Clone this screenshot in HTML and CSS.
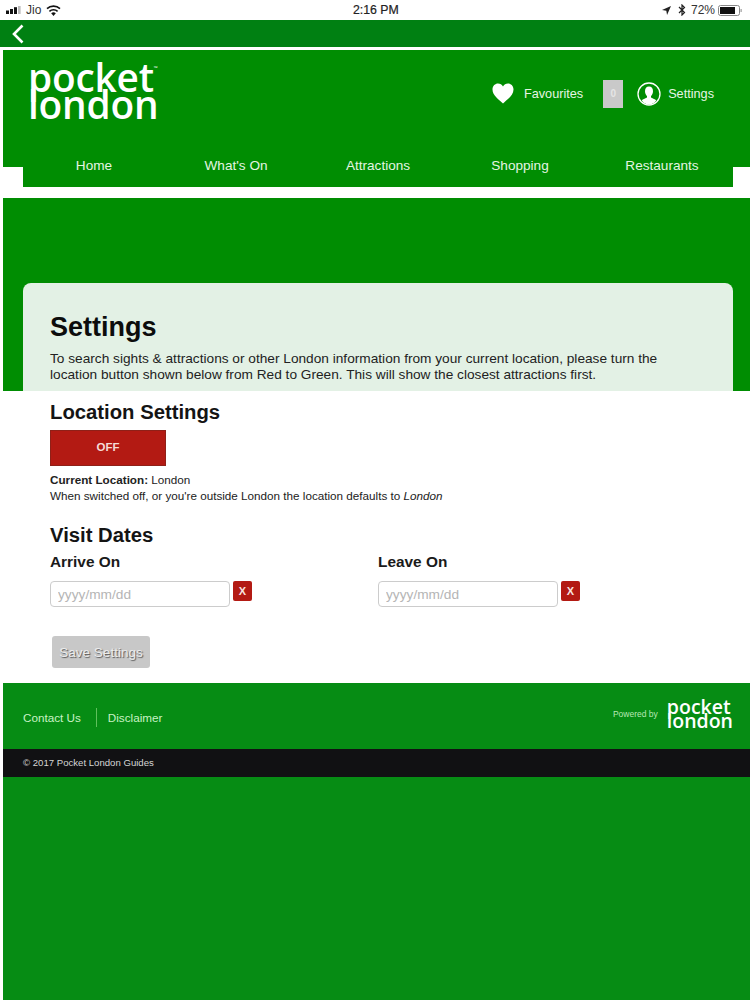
FILE: index.html
```html
<!DOCTYPE html>
<html lang="en">
<head>
<meta charset="utf-8">
<title>Settings - Pocket London</title>
<link rel="stylesheet" href="styles.css">
</head>
<body>
<div class="status">
  <div class="status-left">
    <svg class="signal" width="15" height="8" viewBox="0 0 15 8"><rect x="0" y="4.5" width="3" height="3.5" fill="#111"/><rect x="4" y="3" width="3" height="5" fill="#111"/><rect x="8" y="1.2" width="3" height="6.8" fill="#111"/><rect x="12" y="0" width="2.6" height="8" fill="#bbb"/></svg>
    <span>Jio</span>
    <svg width="15" height="11" viewBox="0 0 15 11"><path d="M7.5 11 L5.2 8.3 A3.4 3.4 0 0 1 9.8 8.3 Z" fill="#111"/><path d="M3.4 6.3 A6 6 0 0 1 11.6 6.3" fill="none" stroke="#111" stroke-width="1.6"/><path d="M1 3.7 A9.4 9.4 0 0 1 14 3.7" fill="none" stroke="#111" stroke-width="1.6"/></svg>
  </div>
  <div class="status-time">2:16 PM</div>
  <div class="status-right">
    <svg class="arrow-ico" width="9" height="9" viewBox="0 0 10 10"><path d="M10 0 L0 4.4 L4.8 5.2 L5.6 10 Z" fill="#222"/></svg>
    <svg class="bt-ico" width="8" height="12" viewBox="0 0 8 12"><path d="M1 3 L6.5 8.5 L4 11 V1 L6.5 3.5 L1 9" fill="none" stroke="#222" stroke-width="1.2"/></svg>
    <span>72%</span>
    <svg width="24" height="11" viewBox="0 0 24 11"><rect x="0.5" y="0.5" width="21" height="10" rx="2" fill="none" stroke="#888"/><rect x="2" y="2" width="15" height="7" fill="#111"/><rect x="22.6" y="4" width="1" height="3" fill="#888"/></svg>
  </div>
</div>
<div class="page">
  <div class="backbar">
    <svg width="12" height="20" viewBox="0 0 12 20"><path d="M10.5 1.5 L2 10 L10.5 18.5" fill="none" stroke="#fff" stroke-width="2.6"/></svg>
  </div>
  <div class="shell">
    <header class="top">
      <div class="top-row">
        <div class="logo"><span>pocket<sup class="tm">™</sup></span><span>london</span></div>
        <div class="tools">
          <svg class="heart" width="22" height="21" viewBox="0 0 22 21"><path d="M11 20.5 C7 16.5 0.5 12.5 0.5 6.5 C0.5 2.8 3.2 0.5 6 0.5 C8.2 0.5 10 1.7 11 3.6 C12 1.7 13.8 0.5 16 0.5 C18.8 0.5 21.5 2.8 21.5 6.5 C21.5 12.5 15 16.5 11 20.5 Z" fill="#fff"/></svg>
          <span class="tool-label">Favourites</span>
          <span class="count">0</span>
          <svg class="user" width="24" height="24" viewBox="0 0 24 24"><circle cx="12" cy="12" r="11" fill="none" stroke="#fff" stroke-width="1.3"/><path d="M12 4.5 C9.4 4.5 8 6.6 8 9.2 C8 11.2 8.9 13 10 14 L10 15.6 C8 16.8 5.8 17.2 4.8 18.6 C6.6 21.2 9.2 22.6 12 22.6 C14.8 22.6 17.4 21.2 19.2 18.6 C18.2 17.2 16 16.8 14 15.6 L14 14 C15.1 13 16 11.2 16 9.2 C16 6.6 14.6 4.5 12 4.5 Z" fill="#fff"/></svg>
          <span class="tool-label">Settings</span>
        </div>
      </div>
      <nav class="nav">
        <a>Home</a><a>What's On</a><a>Attractions</a><a>Shopping</a><a>Restaurants</a>
      </nav>
    </header>
    <section class="hero">
      <div class="intro">
        <h1>Settings</h1>
        <p>To search sights &amp; attractions or other London information from your current location, please turn the location button shown below from Red to Green. This will show the closest attractions first.</p>
      </div>
    </section>
    <main class="content">
      <h2 class="h-location">Location Settings</h2>
      <button class="off">OFF</button>
      <p class="loc"><b>Current Location:</b> London</p>
      <p class="loc">When switched off, or you're outside London the location defaults to <i>London</i></p>
      <h2 class="h-visit">Visit Dates</h2>
      <div class="dates">
        <div class="date">
          <h3>Arrive On</h3>
          <div class="date-row"><input class="date-input" placeholder="yyyy/mm/dd"><span class="clear">X</span></div>
        </div>
        <div class="date">
          <h3>Leave On</h3>
          <div class="date-row"><input class="date-input" placeholder="yyyy/mm/dd"><span class="clear">X</span></div>
        </div>
      </div>
      <button class="save">Save Settings</button>
    </main>
    <footer class="foot">
      <div class="foot-main">
        <div class="foot-links"><a>Contact Us</a><a class="second">Disclaimer</a></div>
        <div class="powered"><span>Powered by</span><div class="logo-small"><span>pocket</span><span>london</span></div></div>
      </div>
      <div class="copy">© 2017 Pocket London Guides</div>
    </footer>
    <div class="rest"></div>
  </div>
</div>
</body>
</html>
```

FILE: styles.css
```css
* { box-sizing: border-box; }
html, body { margin: 0; padding: 0; }
body {
  width: 750px;
  height: 1000px;
  overflow: hidden;
  background: #fff;
  font-family: "Liberation Sans", Arial, sans-serif;
  color: #111;
  display: flex;
  flex-direction: column;
}
.status {
  height: 20px;
  flex: none;
  display: flex;
  align-items: center;
  justify-content: space-between;
  padding: 0 8px 0 6px;
  font-size: 12px;
  color: #333;
  position: relative;
}
.status-left, .status-right { display: flex; align-items: center; gap: 5px; }
.status-right { gap: 3px; }
.arrow-ico { margin-right: 4px; }
.bt-ico { margin-right: 2px; }
.status-time {
  position: absolute;
  left: 353px;
  top: 3px;
  font-size: 12.3px;
  color: #222;
  font-weight: 400;
  -webkit-text-stroke: 0.2px #222;
}
.page { flex: 1; display: flex; flex-direction: column; min-height: 0; }
.backbar {
  height: 27px;
  flex: none;
  background: #008012;
  display: flex;
  align-items: center;
  padding-left: 12px;
}
.shell {
  flex: 1;
  margin: 3px 0 0 3px;
  display: flex;
  flex-direction: column;
  min-height: 0;
}
.top { height: 137px; flex: none; }
.top-row {
  height: 117px;
  background: #008d02;
  display: flex;
  justify-content: space-between;
  padding: 11px 0 0 25px;
}
.logo {
  display: flex;
  flex-direction: column;
  font-family: "Open Sans", sans-serif;
  font-weight: 600;
  font-size: 38.8px;
  letter-spacing: -0.2px;
  line-height: 27px;
  color: #fff;
  margin-top: 3px;
}
.tm { font-size: 5px; line-height: 0; vertical-align: 22px; }
.tools {
  display: flex;
  align-items: center;
  height: 65px;
  color: #e6f5e4;
  font-size: 12.7px;
  padding-right: 36px;
}
.heart { margin-right: 10px; }
.tool-label { white-space: nowrap; }
.count {
  width: 20px;
  height: 28px;
  margin: 0 14px 0 20px;
  background: #c9c9c9;
  color: #e5e5e5;
  font-size: 10px;
  font-weight: 700;
  display: flex;
  align-items: center;
  justify-content: center;
}
.user { margin-right: 7px; }
.nav {
  height: 44px;
  margin: -24px 17px 0 20px;
  background: #008d02;
  display: grid;
  grid-template-columns: repeat(5, 1fr);
  position: relative;
}
.nav a {
  color: #e4f5e2;
  font-size: 13.6px;
  text-align: center;
  line-height: 46px;
}
.hero {
  height: 193px;
  flex: none;
  margin-top: 11px;
  background: #008d02;
  padding: 85px 17px 0 20px;
}
.intro {
  height: 108px;
  background: #e3f1e5;
  border-radius: 8px 8px 0 0;
  padding: 28px 60px 0 27px;
}
h1 {
  margin: 0 0 8px;
  font-size: 27px;
  line-height: 32px;
  color: #0c0c0c;
}
.intro p {
  margin: 0;
  font-size: 13.68px;
  line-height: 16px;
  color: #222;
}
.content {
  height: 292px;
  flex: none;
  padding: 10px 0 0 47px;
}
h2 {
  margin: 0;
  font-size: 20.3px;
  line-height: 23px;
  color: #141414;
}
.off {
  display: block;
  width: 116px;
  height: 36px;
  margin: 6px 0 6px;
  border: 1px solid #8f2018;
  background: #b31a13;
  color: #f5dcd8;
  font: 700 11.5px "Liberation Sans", Arial, sans-serif;
  padding: 0 0 2px;
}
.loc {
  margin: 0;
  font-size: 11.7px;
  line-height: 16px;
  color: #222;
}
.h-visit { margin-top: 20px; }
.dates { display: flex; margin-top: 6px; }
.date { width: 328px; }
h3 {
  margin: 0 0 10px;
  font-size: 15.4px;
  line-height: 18px;
  color: #1a1a1a;
}
.date-row { display: flex; align-items: flex-start; gap: 3px; }
.date-input {
  width: 180px;
  height: 26px;
  border: 1.5px solid #ccc;
  border-radius: 4px;
  padding: 0 7px;
  font: 13.7px "Liberation Sans", Arial, sans-serif;
  background: #fff;
}
.date-input::placeholder { color: #b5b5b5; opacity: 1; }
.clear {
  width: 19px;
  height: 20px;
  background: #b31a13;
  border-radius: 2px;
  color: #f8e4e0;
  font-size: 11px;
  font-weight: 700;
  display: flex;
  align-items: center;
  justify-content: center;
}
.save {
  display: block;
  width: 98px;
  height: 32px;
  margin: 29px 0 0 2px;
  border: 0;
  border-radius: 3px;
  background: #c8c8c8;
  color: #ececec;
  font: 13.5px "Liberation Sans", Arial, sans-serif;
  text-shadow: 1px 1px 1px #555;
  padding: 0;
}
.foot { flex: none; }
.foot-main {
  height: 66px;
  background: #068c14;
  display: flex;
  justify-content: space-between;
  padding: 0 17px 0 20px;
}
.foot-links {
  display: flex;
  align-items: center;
  height: 69px;
  font-size: 11.7px;
  color: #c9f2c4;
}
.foot-links a { padding-right: 15px; }
.foot-links .second {
  padding-left: 11px;
  border-left: 1px solid #5fc05c;
  line-height: 19px;
}
.powered {
  display: flex;
  align-items: center;
  gap: 9px;
  height: 61px;
  font-size: 8.5px;
  color: #b8e8b4;
}
.logo-small {
  display: flex;
  flex-direction: column;
  font-family: "Open Sans", sans-serif;
  font-weight: 600;
  font-size: 19.5px;
  line-height: 14px;
  color: #fff;
}
.copy {
  height: 28px;
  background: #111113;
  color: #d5d5d5;
  font-size: 9.6px;
  line-height: 27px;
  padding-left: 20px;
}
.rest { flex: 1; background: #068c14; }
```
